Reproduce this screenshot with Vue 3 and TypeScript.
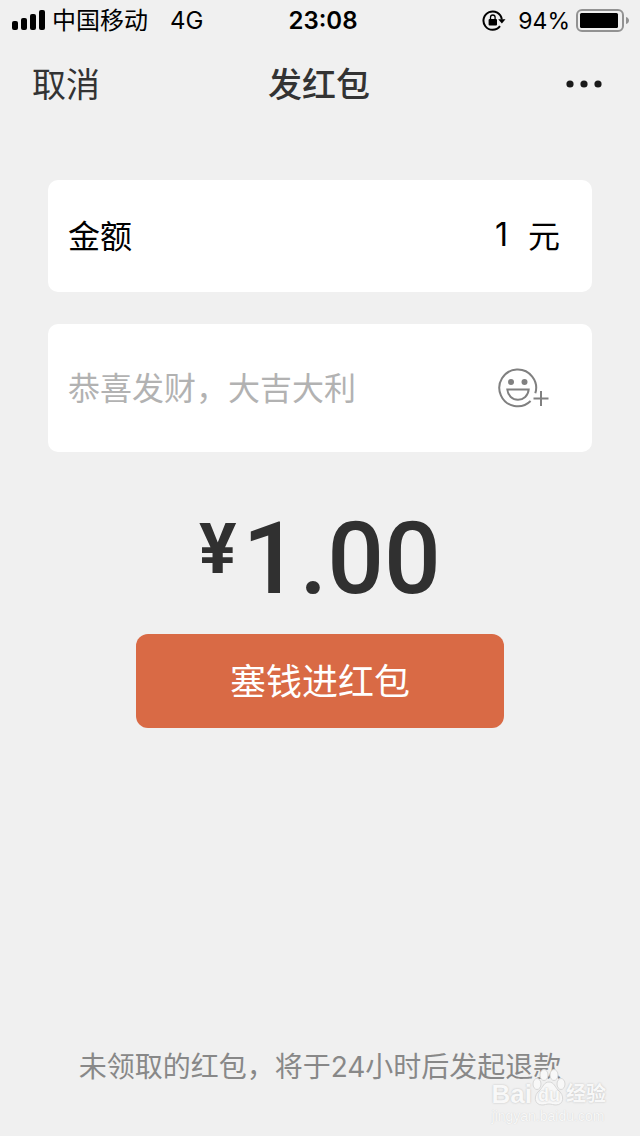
<script setup lang="ts">
import { computed, ref } from 'vue'

const amount = ref('1')
const greeting = ref('')
const total = computed(() => (Number(amount.value) || 0).toFixed(2))
</script>

<template>
  <main class="page">
    <header class="status">
      <div class="status-left">
        <svg class="signal" width="34" height="22" viewBox="0 0 34 22" aria-hidden="true">
          <rect x="0" y="11" width="6" height="9" rx="2" />
          <rect x="9" y="8" width="6" height="12" rx="2" />
          <rect x="18" y="4" width="6" height="16" rx="2" />
          <rect x="27" y="0" width="6" height="20" rx="2" />
        </svg>
        <span class="carrier">中国移动</span>
        <span>4G</span>
      </div>
      <time class="clock">23:08</time>
      <div class="status-right">
        <svg width="24" height="22" viewBox="0 0 24 22" aria-hidden="true">
          <path d="M18 16.200A9.200 9.200 0 1 1 19.800 9.500" fill="none" stroke="#000" stroke-width="2" />
          <path d="M16.200 9.200h7.300l-3.600 4.200z" />
          <rect x="6.600" y="9" width="8.400" height="6.500" rx="1" />
          <path d="M8.500 10V7.300a2.300 2.300 0 0 1 4.600 0V10" fill="none" stroke="#000" stroke-width="1.300" />
        </svg>
        <span class="percent">94%</span>
        <svg class="battery" width="54" height="24" viewBox="0 0 54 24" aria-hidden="true">
          <rect x="1" y="1" width="46" height="21" rx="5" fill="none" stroke="#929292" stroke-width="2" />
          <rect x="4" y="4" width="38" height="15" rx="1.500" />
          <path d="M50 8c4 1 4 6 0 7z" fill="#929292" />
        </svg>
      </div>
    </header>

    <nav class="nav">
      <button type="button" class="cancel">取消</button>
      <h1>发红包</h1>
      <button type="button" class="more" aria-label="更多">
        <svg width="36" height="8" viewBox="0 0 36 8" aria-hidden="true">
          <circle cx="4" cy="4" r="3.600" />
          <circle cx="18" cy="4" r="3.600" />
          <circle cx="32" cy="4" r="3.600" />
        </svg>
      </button>
    </nav>

    <form class="form" @submit.prevent>
      <div class="card">
        <label for="amount">金额</label>
        <input id="amount" v-model="amount" class="amount" type="text" inputmode="decimal" />
        <span class="unit">元</span>
      </div>
      <div class="card message">
        <input v-model="greeting" class="greeting" type="text" placeholder="恭喜发财，大吉大利" aria-label="祝福语" />
        <button type="button" class="emoji" aria-label="表情">
          <svg width="52" height="40" viewBox="0 0 52 40" aria-hidden="true">
            <path d="M37.300 25.300A18.400 18.400 0 1 0 32.600 33" fill="none" stroke="#808080" stroke-width="2" />
            <circle cx="13" cy="14" r="3" fill="#808080" />
            <circle cx="26.500" cy="14" r="3" fill="#808080" />
            <path d="M9.300 21.500h21.400c-.6 6.200-5.100 10.200-10.700 10.200S9.900 27.700 9.300 21.500z" fill="none" stroke="#808080" stroke-width="2" />
            <path d="M35.500 30.500h15M43 23v15" fill="none" stroke="#808080" stroke-width="2" />
          </svg>
        </button>
      </div>
      <output class="total" for="amount"><span class="currency">¥</span><span>{{ total }}</span></output>
      <button type="submit" class="submit">塞钱进红包</button>
    </form>

    <footer class="footer">未领取的红包，将于24小时后发起退款</footer>

    <div class="watermark">
      <div class="brand">
        <span class="latin">Bai</span>
        <span class="paw">
          <svg width="34" height="38" viewBox="0 0 34 38" aria-hidden="true">
            <g fill="#f8f8f8" stroke="#d8d8d8" stroke-width="1">
              <ellipse cx="5" cy="16" rx="4" ry="5.500" />
              <ellipse cx="12" cy="7" rx="4" ry="5.500" />
              <ellipse cx="22" cy="7" rx="4" ry="5.500" />
              <ellipse cx="29" cy="16" rx="4" ry="5.500" />
              <path d="M17 14c5 0 6 5 9 8 7 5 6 15-2 15-3 0-4-1-7-1s-4 1-7 1c-8 0-9-10-2-15 3-3 4-8 9-8z" />
            </g>
          </svg>
          <span class="du">du</span>
        </span>
        <span class="cn">经验</span>
      </div>
      <div class="site">jingyan.baidu.com</div>
    </div>
  </main>
</template>

<style>
body {
  margin: 0;
  background: #f0f0f0;
}
</style>

<style scoped>
.page {
  position: relative;
  display: flex;
  flex-direction: column;
  box-sizing: border-box;
  min-height: 100vh;
  background: #f0f0f0;
  color: #000;
  font-family: Inter, "Noto Sans CJK SC", sans-serif;
}

button,
input {
  padding: 0;
  border: 0;
  background: none;
  color: inherit;
  font: inherit;
}

svg {
  display: block;
}

.status {
  display: grid;
  grid-template-columns: 1fr auto 1fr;
  align-items: center;
  box-sizing: border-box;
  height: 40px;
  padding: 2px 6px 0 12px;
  font-size: 24px;
  line-height: 38px;
}

.status-left,
.status-right {
  display: flex;
  align-items: center;
}

.status-right {
  justify-content: flex-end;
}

.carrier {
  margin: 0 22px 0 6px;
}

.clock {
  font-weight: 600;
}

.percent {
  margin: 0 6px 0 12px;
  font-size: 23px;
}

.battery {
  margin-right: 4px;
}

.nav {
  display: grid;
  grid-template-columns: 1fr auto 1fr;
  align-items: center;
  box-sizing: border-box;
  height: 88px;
  padding: 0 34px 4px 32px;
  color: #333;
  font-size: 34px;
}

.nav h1 {
  margin: 0;
  font-size: 34px;
  font-weight: 500;
}

.cancel {
  justify-self: start;
}

.more {
  justify-self: end;
  padding: 14px 4px 10px;
  color: #1a1a1a;
}

.more svg {
  fill: currentColor;
}

.form {
  display: flex;
  flex-direction: column;
  padding: 52px 48px 0;
}

.card {
  display: flex;
  align-items: center;
  box-sizing: border-box;
  height: 112px;
  margin-bottom: 32px;
  padding: 0 32px 4px 20px;
  border-radius: 10px;
  background: #fff;
  font-size: 32px;
}

.card input {
  flex: 1;
  min-width: 0;
  height: 64px;
  outline: none;
}

.card .amount {
  text-align: right;
}

.unit {
  margin-left: 20px;
}

.message {
  height: 128px;
  padding-bottom: 0;
}

.greeting::placeholder {
  color: #b2b2b2;
  opacity: 1;
}

.emoji {
  margin-right: 10px;
}

.total {
  display: flex;
  justify-content: center;
  align-items: flex-start;
  height: 150px;
  color: #303030;
  font-family: Roboto, sans-serif;
  font-size: 100px;
  font-weight: 500;
  line-height: 150px;
}

.currency {
  margin-right: 6px;
  font-size: 70px;
  font-weight: 700;
  line-height: 130px;
}

.submit {
  align-self: center;
  width: 368px;
  max-width: 100%;
  height: 94px;
  padding-bottom: 4px;
  border-radius: 12px;
  background: #d96a45;
  color: #fff;
  font-size: 36px;
}

.footer {
  margin-top: auto;
  padding-bottom: 54px;
  color: #888;
  font-size: 28px;
  line-height: 30px;
  text-align: center;
}

.watermark {
  position: absolute;
  right: 34px;
  bottom: 12px;
  color: #f8f8f8;
  font-family: "Liberation Sans", "Noto Sans CJK SC", sans-serif;
  text-shadow: 0 0 2px #bbb;
}

.brand {
  display: flex;
  align-items: flex-end;
  height: 38px;
  padding-bottom: 2px;
  font-weight: 700;
  line-height: 24px;
}

.latin {
  font-size: 26px;
}

.paw {
  position: relative;
}

.du {
  position: absolute;
  inset: auto 0 0;
  font-size: 18px;
  line-height: 22px;
  text-align: center;
}

.cn {
  font-size: 20px;
}

.site {
  font-size: 14px;
  line-height: 16px;
  text-shadow: 0 0 1px #ccc;
}
</style>
